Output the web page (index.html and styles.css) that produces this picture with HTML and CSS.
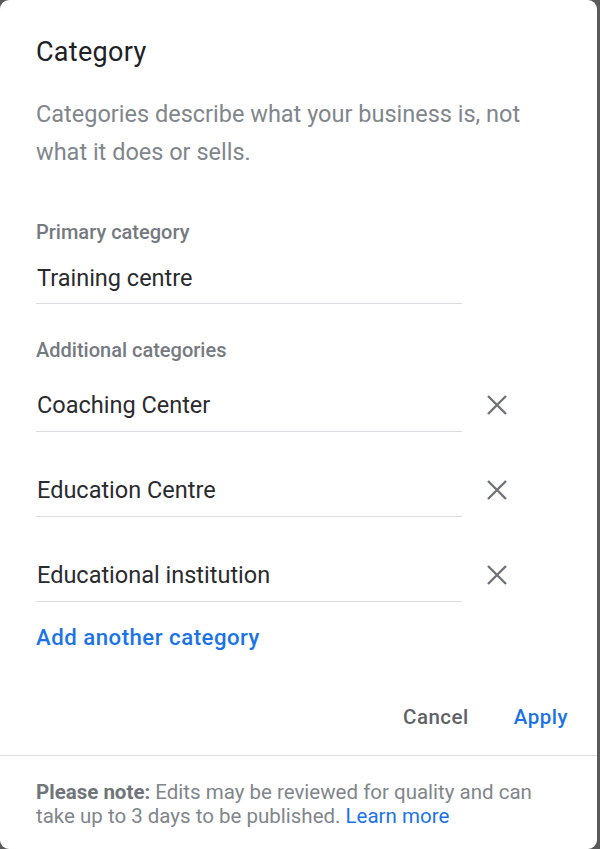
FILE: index.html
```html
<!DOCTYPE html>
<html lang="en">
<head>
<meta charset="utf-8">
<title>Category</title>
<link rel="stylesheet" href="styles.css">
</head>
<body>
<div class="dialog">
  <div class="content">
    <h1 class="title">Category</h1>
    <p class="desc">Categories describe what your business is, not what it does or sells.</p>

    <div class="label label-primary">Primary category</div>
    <div class="row row-primary">
      <div class="field field-primary">Training centre</div>
    </div>

    <div class="label label-additional">Additional categories</div>
    <div class="rows">
      <div class="row">
        <div class="field">Coaching Center</div>
        <button class="remove" aria-label="Remove">
          <svg viewBox="0 0 22 22" width="22" height="22"><path d="M2 2L20 20M20 2L2 20" stroke="#6f7276" stroke-width="2.4" fill="none"/></svg>
        </button>
      </div>
      <div class="row">
        <div class="field">Education Centre</div>
        <button class="remove" aria-label="Remove">
          <svg viewBox="0 0 22 22" width="22" height="22"><path d="M2 2L20 20M20 2L2 20" stroke="#6f7276" stroke-width="2.4" fill="none"/></svg>
        </button>
      </div>
      <div class="row">
        <div class="field">Educational institution</div>
        <button class="remove" aria-label="Remove">
          <svg viewBox="0 0 22 22" width="22" height="22"><path d="M2 2L20 20M20 2L2 20" stroke="#6f7276" stroke-width="2.4" fill="none"/></svg>
        </button>
      </div>
    </div>

    <a class="add" href="#">Add another category</a>
  </div>

  <div class="actions">
    <button class="btn btn-cancel">Cancel</button>
    <button class="btn btn-apply">Apply</button>
  </div>

  <div class="note">
    <b>Please note:</b> Edits may be reviewed for quality and can take up to 3 days to be published. <a href="#">Learn more</a>
  </div>
</div>
</body>
</html>
```

FILE: styles.css
```css
html, body {
  margin: 0;
  padding: 0;
}
body {
  background: #5a5a5a;
  font-family: Roboto, "Liberation Sans", Arial, sans-serif;
  width: 600px;
  height: 849px;
  overflow: hidden;
}
.dialog {
  width: 597px;
  height: 849px;
  background: #fff;
  border-radius: 9px;
  box-sizing: border-box;
  display: flex;
  flex-direction: column;
}
.content {
  padding: 37px 0 0 36px;
  display: flex;
  flex-direction: column;
  align-items: flex-start;
}
.title {
  margin: 0;
  font-size: 27px;
  line-height: 30px;
  font-weight: 400;
  letter-spacing: 0.3px;
  color: #202124;
}
.desc {
  margin: 28px 0 0;
  width: 505px;
  font-size: 23.5px;
  line-height: 38px;
  color: #80868b;
}
.label {
  font-size: 20px;
  line-height: 24px;
  font-weight: 500;
  color: #757a7f;
}
.label-primary {
  margin-top: 49px;
}
.label-additional {
  margin-top: 34px;
}
.row {
  display: flex;
  align-items: flex-start;
}
.row-primary {
  margin-top: 22px;
}
.rows {
  display: flex;
  flex-direction: column;
  gap: 46px;
  margin-top: 31px;
}
.field {
  width: 425px;
  padding: 0 0 14px 1px;
  border-bottom: 1px solid #dadce0;
  font-size: 23.5px;
  line-height: 24px;
  color: #2a2b2e;
}
.field-primary {
  padding-bottom: 13px;
}
.remove {
  margin: 1px 0 0 24px;
  padding: 0;
  border: 0;
  background: none;
  width: 22px;
  height: 22px;
  display: block;
}
.remove svg {
  display: block;
}
.add {
  margin-top: 23px;
  font-size: 22.2px;
  line-height: 24px;
  font-weight: 500;
  letter-spacing: 0.5px;
  color: #1a73e8;
  text-decoration: none;
}
.actions {
  margin-top: 56px;
  display: flex;
  justify-content: flex-end;
  gap: 45px;
  padding: 0 29px 26px 0;
  border-bottom: 1px solid #dadce0;
}
.btn {
  padding: 0;
  border: 0;
  background: none;
  font-family: Roboto, "Liberation Sans", Arial, sans-serif;
  font-size: 20.5px;
  line-height: 24px;
  font-weight: 500;
  letter-spacing: 0.5px;
}
.btn-cancel {
  color: #5f6368;
}
.btn-apply {
  color: #1a73e8;
}
.note {
  padding: 24px 30px 0 36px;
  font-size: 20.5px;
  line-height: 24px;
  color: #80868b;
}
.note b {
  font-weight: 700;
  color: #70757a;
}
.note a {
  color: #1a73e8;
  text-decoration: none;
}
```
